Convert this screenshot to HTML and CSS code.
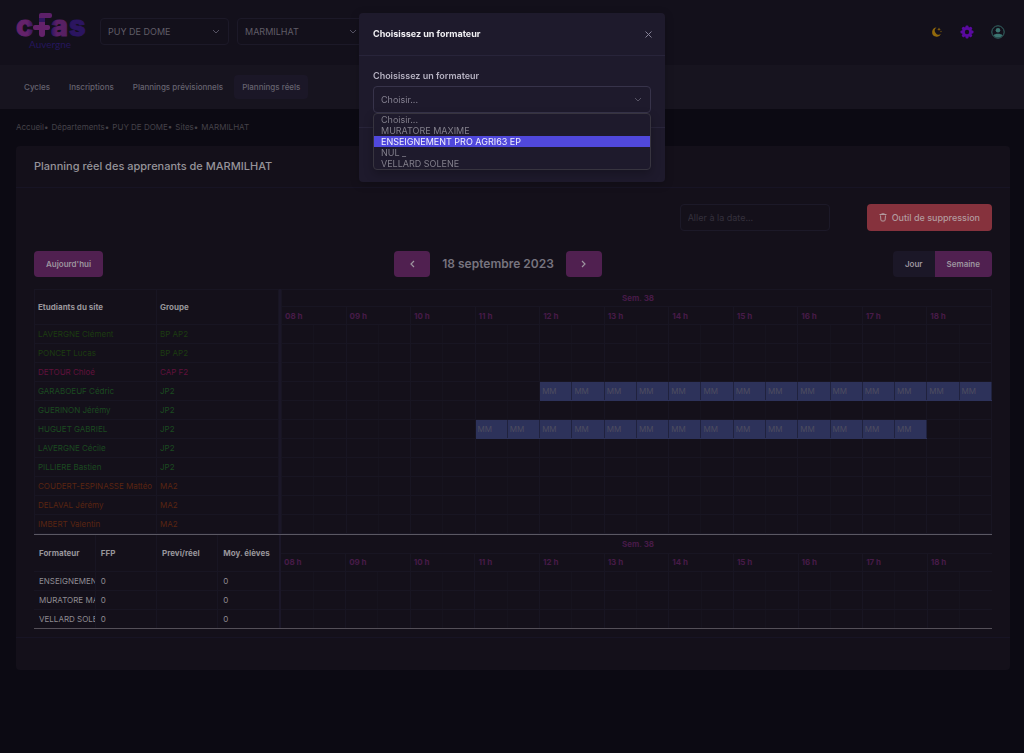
FILE: index.html
```html
<!DOCTYPE html>
<html lang="fr">
<head>
<meta charset="utf-8">
<title>Planning réel des apprenants de MARMILHAT</title>
<link rel="stylesheet" href="styles.css">
</head>
<body>
<header class="topbar">
  <a class="brand" href="#" aria-label="cfas Auvergne">
    <svg class="brand-logo" viewBox="0 0 70 38" width="70" height="38">
      <defs>
        <linearGradient id="fadeC" x1="0" x2="1"><stop offset="0.65" stop-color="#64226a"/><stop offset="1" stop-color="#32175f"/></linearGradient>
        <linearGradient id="fadeA" x1="0" x2="1"><stop offset="0" stop-color="#2b1560"/><stop offset="0.35" stop-color="#5c2067"/><stop offset="1" stop-color="#54205f"/></linearGradient>
      </defs>
      <g class="brand-letters">
        <text x="0" y="23" fill="url(#fadeC)" stroke="url(#fadeC)">c</text>
        <text x="35" y="23" fill="url(#fadeA)" stroke="url(#fadeA)">a</text>
        <text x="53" y="23" fill="#2b1560" stroke="#2b1560">s</text>
      </g>
      <rect x="23" y="1" width="6" height="23" rx="3" fill="#64226a"/>
      <rect x="23" y="0" width="13" height="5" rx="2" fill="#5c2068"/>
      <rect x="17" y="12" width="17" height="5" rx="2" fill="#64226a"/>
      <rect x="23" y="5" width="6" height="4" fill="#2f165f"/>
      <text class="brand-region" x="13" y="35">Auvergne</text>
    </svg>
  </a>
  <select class="control site-select" aria-label="Département"><option>PUY DE DOME</option></select>
  <select class="control site-select" aria-label="Site"><option>MARMILHAT</option></select>
  <div class="topbar-actions">
    <button class="icon-button" aria-label="Thème">
      <svg width="12" height="12" viewBox="0 0 12 12"><path d="M5.500 1.500A4.600 4.600 0 1 0 10 7.800 3.400 3.400 0 0 1 5.500 1.500z" fill="#92690b"/><path d="M8 1.500l.5 1.300 1.300.5-1.300.5L8 5.100l-.5-1.300-1.300-.5 1.300-.5zM10 4.500l.3.700.7.300-.7.300-.3.700-.3-.7-.7-.3.700-.3z" fill="#92690b"/></svg>
    </button>
    <button class="icon-button" aria-label="Paramètres">
      <svg width="14" height="14" viewBox="0 0 14 14"><g fill="#5a0aa0"><rect x="5.500" y="0.500" width="3" height="13" rx="1"/><rect x="5.500" y="0.500" width="3" height="13" rx="1" transform="rotate(45 7 7)"/><rect x="5.500" y="0.500" width="3" height="13" rx="1" transform="rotate(90 7 7)"/><rect x="5.500" y="0.500" width="3" height="13" rx="1" transform="rotate(135 7 7)"/><circle cx="7" cy="7" r="5"/></g><circle cx="7" cy="7" r="2.200" fill="#13101b"/></svg>
    </button>
    <button class="icon-button" aria-label="Profil">
      <svg width="14" height="14" viewBox="0 0 14 14"><circle cx="7" cy="7" r="6.200" fill="none" stroke="#346865" stroke-width="1"/><circle cx="7" cy="5.300" r="2.300" fill="#3c7571"/><path d="M2.500 10.300C4 8.300 10 8.300 11.500 10.300A5.600 5.600 0 0 1 2.500 10.300z" fill="#3c7571"/></svg>
    </button>
  </div>
</header>

<nav class="mainnav">
  <a class="nav-link" href="#">Cycles</a>
  <a class="nav-link" href="#">Inscriptions</a>
  <a class="nav-link" href="#">Plannings prévisionnels</a>
  <a class="nav-link is-active" href="#">Plannings réels</a>
</nav>

<main class="content">
  <nav class="breadcrumb" aria-label="Fil d'Ariane">
    <a href="#">Accueil•</a><a href="#">Départements•</a><a href="#">PUY DE DOME•</a><a href="#">Sites•</a><a href="#">MARMILHAT</a>
  </nav>

  <section class="card">
    <h1 class="card-title">Planning réel des apprenants de MARMILHAT</h1>
    <div class="card-body">
      <div class="tools">
        <input class="control date-input" type="text" placeholder="Aller à la date..." aria-label="Aller à la date">
        <button class="button button-danger">
          <svg width="8" height="9" viewBox="0 0 8 9" fill="none" stroke="currentColor" stroke-width="1"><path d="M0.500 1.500H7.500M1.500 2.500l.4 4.500q.1 1 1.100 1h2q1 0 1.100-1L6.500 2.500M2.500.800h3"/></svg>
          Outil de suppression
        </button>
      </div>
      <div class="calendar-bar">
        <button class="button button-primary">Aujourd'hui</button>
        <div class="calendar-period">
          <button class="button button-primary step" aria-label="Précédent"><svg width="5" height="8" viewBox="0 0 5 8"><path d="M4 1L1 4l3 3" fill="none" stroke="currentColor" stroke-width="1.200"/></svg></button>
          <h2 class="calendar-date">18 septembre 2023</h2>
          <button class="button button-primary step" aria-label="Suivant"><svg width="5" height="8" viewBox="0 0 5 8"><path d="M1 1l3 3-3 3" fill="none" stroke="currentColor" stroke-width="1.200"/></svg></button>
        </div>
        <div class="view-switch">
          <button class="button button-dark">Jour</button><button class="button button-primary">Semaine</button>
        </div>
      </div>

      <div class="planning">
        <table class="grid people">
          <thead><tr><th>Etudiants du site</th><th>Groupe</th></tr></thead>
          <tbody>
            <tr class="lime"><td>LAVERGNE Clément</td><td>BP AP2</td></tr>
            <tr class="lime"><td>PONCET Lucas</td><td>BP AP2</td></tr>
            <tr class="pink"><td>DETOUR Chloé</td><td>CAP F2</td></tr>
            <tr class="green"><td>GARABOEUF Cédric</td><td>JP2</td></tr>
            <tr class="green"><td>GUERINON Jérémy</td><td>JP2</td></tr>
            <tr class="green"><td>HUGUET GABRIEL</td><td>JP2</td></tr>
            <tr class="green"><td>LAVERGNE Cécile</td><td>JP2</td></tr>
            <tr class="green"><td>PILLIERE Bastien</td><td>JP2</td></tr>
            <tr class="rust"><td>COUDERT-ESPINASSE Mattéo</td><td>MA2</td></tr>
            <tr class="rust"><td>DELAVAL Jérémy</td><td>MA2</td></tr>
            <tr class="rust"><td>IMBERT Valentin</td><td>MA2</td></tr>
          </tbody>
        </table>
        <div class="divider"></div>
        <table class="grid timeline" data-rows="11" data-events="3:8,5:6:20"></table>
      </div>

      <div class="planning trainers">
        <table class="grid people">
          <thead><tr><th>Formateur</th><th>FFP</th><th>Previ/réel</th><th>Moy. élèves</th></tr></thead>
          <tbody>
            <tr><td>ENSEIGNEMEN</td><td>0</td><td></td><td>0</td></tr>
            <tr><td>MURATORE MA</td><td>0</td><td></td><td>0</td></tr>
            <tr><td>VELLARD SOLE</td><td>0</td><td></td><td>0</td></tr>
          </tbody>
        </table>
        <div class="divider"></div>
        <table class="grid timeline" data-rows="3" data-events=""></table>
      </div>
    </div>
    <div class="card-footer"></div>
  </section>
</main>

<div class="modal" role="dialog" aria-labelledby="modal-title">
  <div class="modal-header">
    <h2 class="modal-title" id="modal-title">Choisissez un formateur</h2>
    <button class="icon-button close" aria-label="Fermer"><svg width="7" height="7" viewBox="0 0 7 7"><path d="M.5.500l6 6M6.500.500l-6 6" stroke="currentColor" stroke-width="1"/></svg></button>
  </div>
  <div class="modal-body">
    <label class="field-label" for="trainer">Choisissez un formateur</label>
    <div class="dropdown">
      <select class="control trainer-select" id="trainer"><option>Choisir...</option></select>
      <ul class="options" role="listbox" aria-label="Formateurs">
        <li role="option">Choisir...</li>
        <li role="option">MURATORE MAXIME</li>
        <li role="option" aria-selected="true" class="is-selected">ENSEIGNEMENT PRO AGRI63 EP</li>
        <li role="option">NUL _</li>
        <li role="option">VELLARD SOLENE</li>
      </ul>
    </div>
  </div>
  <div class="modal-footer"></div>
</div>
<script src="app.js"></script>
</body>
</html>
```
FILE: styles.css
```css
* { box-sizing: border-box; }

body {
  margin: 0;
  min-height: 100vh;
  background: #0c0a13;
  color: #8f8c92;
  font-family: Inter, "Liberation Sans", sans-serif;
  font-size: 8px;
  line-height: 12px;
}

a { color: inherit; text-decoration: none; }
h1, h2, ul { margin: 0; padding: 0; }
button, select, input { font: inherit; color: inherit; }
svg { display: block; overflow: visible; }

.control {
  appearance: none;
  height: 27px;
  padding: 0 7px;
  border: 1px solid #1c1928;
  border-radius: 4px;
  background-color: transparent;
  font-size: 9px;
}

select.control {
  background-image: url("data:image/svg+xml,%3Csvg xmlns='http://www.w3.org/2000/svg' viewBox='0 0 8 6'%3E%3Cpath d='M1 1l3 3 3-3' fill='none' stroke='%23565364'/%3E%3C/svg%3E");
  background-repeat: no-repeat;
  background-position: right 8px center;
  background-size: 8px 6px;
}

/* Header */
.topbar {
  display: flex;
  align-items: center;
  gap: 8px;
  height: 65px;
  padding: 0 19px 2px 16px;
  background: #13101b;
}
.brand { margin-right: 6px; }
.brand-letters { font-size: 29px; font-weight: 800; stroke-width: 1; stroke-linejoin: round; }
.brand-region { font-family: Lato, sans-serif; font-size: 10px; fill: #25165c; }
.site-select { width: 129px; color: #605d67; }
.topbar-actions { display: flex; align-items: center; gap: 17px; margin-left: auto; }
.icon-button { padding: 0; border: 0; background: none; }

.mainnav {
  display: flex;
  align-items: center;
  gap: 3px;
  height: 44px;
  padding: 0 16px;
  background: #17141f;
}
.nav-link { padding: 6px 8px; border-radius: 4px; color: #66636f; font-weight: 500; }
.nav-link.is-active { background: #1b1727; }

.content { padding: 0 14px 0 16px; }
.breadcrumb { display: flex; gap: 3px; padding: 12px 0 13px; color: #454249; }

/* Card */
.card { border-radius: 4px; background: #14101a; }
.card-title {
  padding: 12px 18px 13px;
  border-bottom: 1px solid #171424;
  color: #969399;
  font-size: 11px;
  font-weight: 500;
  line-height: 16px;
}
.card-body { padding: 16px 18px 8px; }
.card-footer { height: 33px; border-top: 1px solid #171424; }

.tools { display: flex; justify-content: flex-end; gap: 37px; }
.date-input { width: 150px; }
.date-input::placeholder { color: #34313d; opacity: 1; }

.button {
  display: flex;
  align-items: center;
  justify-content: center;
  gap: 5px;
  height: 26px;
  padding: 0 12px;
  border: 0;
  border-radius: 4px;
  color: #9d959f;
  font-weight: 600;
}
.button-primary { background: #502050; }
.button-dark { background: #1b1727; }
.button-danger { height: 27px; background: #86323d; color: #b29a9e; font-size: 9px; font-weight: 500; }

.calendar-bar {
  display: flex;
  align-items: center;
  justify-content: space-between;
  padding: 20px 0 12px;
}
.calendar-period { display: flex; align-items: center; gap: 12px; }
.calendar-date { color: #77747f; font-size: 12px; font-weight: 600; line-height: 16px; }
.step { width: 36px; }
.view-switch { display: flex; }
.view-switch .button:first-child { border-radius: 4px 0 0 4px; }
.view-switch .button:last-child { border-radius: 0 4px 4px 0; }

/* Planning */
.planning { display: grid; grid-template-columns: 245px 2px 1fr; align-items: start; }
.divider { align-self: stretch; background: #1b1728; }
.grid { width: 100%; border-collapse: collapse; table-layout: fixed; }
.grid th, .grid td {
  height: 19px;
  padding: 0 0 0 3px;
  overflow: hidden;
  border: 1px solid #181522;
  text-align: left;
  white-space: nowrap;
}
.people th { height: 35px; font-weight: 700; color: #98959a; }
.trainers { border-top: 1px solid #5b5863; border-bottom: 1px solid #544f58; }
.trainers .grid { border-style: hidden; }
.trainers .people th { height: 36px; }
.trainers .people th, .trainers .people td { padding-left: 5px; }

.timeline .week { height: 17px; text-align: center; }
.timeline th { height: 18px; color: #471b48; font-weight: 700; }
.timeline td:nth-child(odd) { border-right-color: #16131e; }
.timeline td:nth-child(even) { border-left-color: #16131e; }
.trainers .timeline .week { height: 18px; }
.timeline .event.event {
  padding-left: 2px;
  border-color: #2d325a #20223e;
  background: #2d325a;
  color: #4d4d60;
}

.lime { color: #1c3c10; }
.pink { color: #60103c; }
.green { color: #1b4a20; }
.rust { color: #5a2511; }

/* Modal */
.modal {
  position: fixed;
  top: 13px;
  left: 0;
  right: 0;
  width: 306px;
  margin: 0 auto;
  border-radius: 4px;
  background: #1e1a2c;
  box-shadow: 0 2px 10px rgba(0, 0, 0, 0.2);
}
.modal-header {
  display: flex;
  align-items: center;
  justify-content: space-between;
  height: 43px;
  padding: 0 13px 0 14px;
  border-bottom: 1px solid #28243a;
}
.modal-title { color: #f0eff3; font-size: 9px; font-weight: 700; }
.close { color: #858196; }
.modal-body { padding: 14px; }
.field-label { display: block; margin-bottom: 4px; color: #b5b1c1; font-size: 9px; font-weight: 600; }
.dropdown { position: relative; }
.trainer-select { display: block; width: 100%; border-color: #37334a; color: #858191; }
.options {
  position: absolute;
  top: 100%;
  left: 0;
  right: 0;
  overflow: hidden;
  border: 1px solid #37343f;
  border-radius: 4px;
  background: #1e1a2c;
  color: #827f8b;
  font-size: 9px;
  line-height: 11px;
  list-style: none;
  box-shadow: 0 4px 10px rgba(0, 0, 0, 0.25);
}
.options li { padding: 0 7px; }
.options .is-selected { background: #5048dc; color: #f2f1fd; }
.modal-footer { height: 55px; border-top: 1px solid #28243a; }
```
FILE: app.js
```js
const FIRST_HOUR = 8;
const HOURS = 11;
const SLOTS = HOURS * 2;

// data-events holds "row:firstSlot[:endSlot]" entries.
function parseEvents(value) {
  const events = {};
  value.split(",").filter(Boolean).forEach((entry) => {
    const [row, start, end = SLOTS] = entry.split(":").map(Number);
    events[row] = { start, end };
  });
  return events;
}

document.querySelectorAll(".timeline").forEach((table) => {
  const events = parseEvents(table.dataset.events);
  let html = "<colgroup>" + "<col>".repeat(SLOTS) + "</colgroup>";
  html += `<thead><tr><th class="week" colspan="${SLOTS}">Sem. 38</th></tr><tr>`;
  for (let h = 0; h < HOURS; h++) {
    html += `<th colspan="2">${String(FIRST_HOUR + h).padStart(2, "0")} h</th>`;
  }
  html += "</tr></thead><tbody>";
  for (let row = 0; row < Number(table.dataset.rows); row++) {
    html += "<tr>";
    for (let slot = 0; slot < SLOTS; slot++) {
      const event = events[row];
      const busy = event && slot >= event.start && slot < event.end;
      html += busy ? '<td class="event">MM</td>' : "<td></td>";
    }
    html += "</tr>";
  }
  table.innerHTML = html + "</tbody>";
});
```
